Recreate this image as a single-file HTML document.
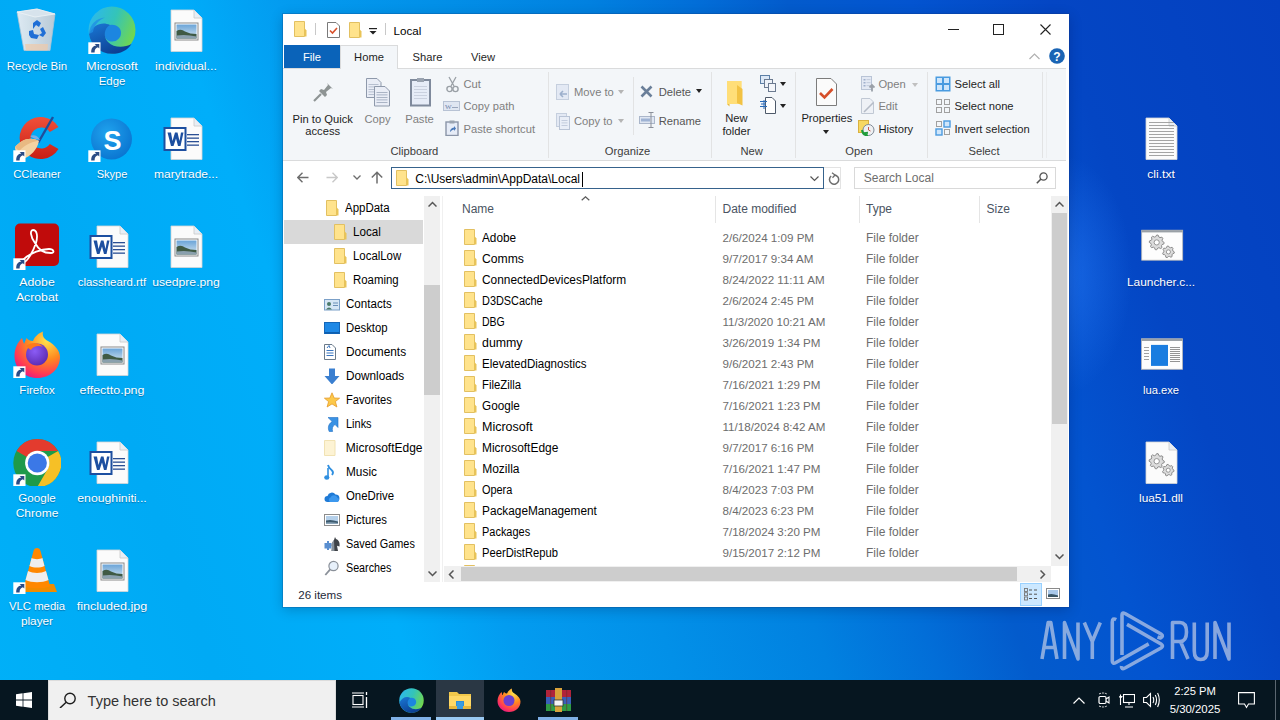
<!DOCTYPE html><html><head><meta charset="utf-8"><style>*{margin:0;padding:0;box-sizing:border-box}
html,body{width:1280px;height:720px;overflow:hidden}
body{position:relative;font-family:"Liberation Sans",sans-serif;font-size:12px;color:#000;background:#0890e6}
.a{position:absolute}
.t{position:absolute;white-space:nowrap;line-height:15px}
.lb{position:absolute;width:90px;text-align:center;color:#fff;font-size:11.8px;line-height:15px;text-shadow:0 1px 1px rgba(0,0,40,.35)}
#win{position:absolute;left:283px;top:14px;width:786px;height:593px;background:#fff;box-shadow:0 0 0 1px rgba(20,50,110,.22),0 3px 12px rgba(0,0,40,.22);overflow:hidden}
.r{position:absolute;white-space:nowrap;font-size:11.2px;line-height:13px;color:#1e1e1e}
.rd{color:#8a8a8a}
.c{text-align:center}
</style></head><body>
<div class="a" style="left:0;top:0;width:1280px;height:720px;background:radial-gradient(ellipse 70px 120px at 1062px 275px,rgba(45,130,255,0.5),rgba(45,130,255,0) 100%),linear-gradient(70deg,#00b0f8 0%,#00aaf5 15%,#00aefa 28%,#039cf0 35%,#0290e8 45%,#0181e0 55%,#026ed8 62%,#035bcc 68%,#0354d0 76%,#0446c4 85%,#0440c0 100%)"></div>
<svg class="a" style="left:13px;top:6px" width="48" height="48" viewBox="0 0 48 48"><defs><linearGradient id="i0rbg" x1="0" x2="1"><stop offset="0" stop-color="#e9eef3"/><stop offset="1" stop-color="#c3ccd6"/></linearGradient></defs><path d="M4 6 L24 3 L42 8 L37 44.5 L11 44.5 Z" fill="url(#i0rbg)" stroke="#b6c6d4" stroke-width="0.8" opacity="0.95"/><path d="M4 6 L24 3 L42 8 L22 11 Z" fill="#d7e3ec" stroke="#eef4f8" stroke-width="0.8"/><path d="M12 38 H35 L34.5 44.5 H12.8Z" fill="#f0c9a8" opacity="0.7"/><g fill="#1f6fd6"><path d="M20 17 L24 14 L28 17 L26 21 L23 19 L20 23Z"/><path d="M30 21 L33 27 L30 31 L26 29 L29 27 L27 23Z"/><path d="M16 25 L20 24 L21 28 L26 29 L24 33 L18 32 L16 29Z"/></g></svg><div class="lb" style="left:-8px;top:58.5px;transform:scaleX(0.967);">Recycle Bin</div>
<svg class="a" style="left:88px;top:6px" width="48" height="48" viewBox="0 0 48 48"><defs><linearGradient id="i1eg1" x1="0" y1="0.2" x2="1" y2="0.6"><stop offset="0" stop-color="#2db8ee"/><stop offset="0.5" stop-color="#34c4b8"/><stop offset="1" stop-color="#74d84a"/></linearGradient><linearGradient id="i1eg2" x1="0" y1="0" x2="0.6" y2="1"><stop offset="0" stop-color="#1a78d6"/><stop offset="1" stop-color="#0c3f92"/></linearGradient></defs><circle cx="24" cy="24" r="23.5" fill="url(#i1eg1)"/><path d="M19 20 C25 17 33 20 33 27 C33 33 27 37 21 35 C16 33 14 25 19 20Z" fill="#1c86e0"/><path d="M1 28 C5 19 14 15 22 19 C16 22 15 31 20 36 C26 42 36 42 43.5 38 C39.5 44.5 32.5 47.8 24 47.8 C12 47.8 2.5 39 1 28Z" fill="url(#i1eg2)"/><path d="M1 28 C1.5 18 9 12 17 11.5 C11 14 6 19 5 26Z" fill="#1f8fe4" opacity="0.8"/><g><rect x="0.3" y="36.3" width="12.2" height="12" fill="#fff"/><path d="M3.2 46.5 C3.2 42 5 40 8.3 39.6 L6.6 37.9 H11.3 V42.6 L9.9 41.2 C7.6 41.8 6.6 43.5 6.6 46.5 Z" fill="#2b4c86"/></g></svg><div class="lb" style="left:67px;top:58.5px;transform:scaleX(1.081);">Microsoft</div><div class="lb" style="left:67px;top:73.5px;transform:scaleX(0.965);">Edge</div>
<svg class="a" style="left:162px;top:6px" width="48" height="48" viewBox="0 0 48 48"><path d="M9 4 H32 L40 12 V45.5 H9 Z" fill="#fbfbfb" stroke="#d6d6d6" stroke-width="0.8"/><path d="M32 4 V12 H40" fill="#e8eef5" stroke="#c9c9c9" stroke-width="0.8"/><rect x="13" y="17" width="23" height="17" fill="#fff" stroke="#8a8a8a" stroke-width="1"/><defs><linearGradient id="i2sky" x1="0" y1="0" x2="0" y2="1"><stop offset="0" stop-color="#6aa4d8"/><stop offset="1" stop-color="#d6e6f0"/></linearGradient></defs><rect x="14.5" y="18.5" width="20" height="14" fill="url(#i2sky)"/><path d="M14.5 25 Q19 22.5 23 25.5 Q28 28 34.5 28 V32.5 H14.5Z" fill="#3f5a44"/><path d="M14.5 29.5 Q24 28 34.5 30.5 V32.5 H14.5Z" fill="#8aa0ae"/></svg><div class="lb" style="left:141px;top:58.5px;transform:scaleX(1.047);">individual...</div>
<svg class="a" style="left:13px;top:114px" width="48" height="48" viewBox="0 0 48 48"><defs><linearGradient id="i3cc" x1="0" y1="0" x2="0" y2="1"><stop offset="0" stop-color="#f0503a"/><stop offset="1" stop-color="#c81e14"/></linearGradient></defs><path d="M45.5 13 A21 21 0 1 0 45.5 35 L36.8 30 A10.5 10.5 0 1 1 36.8 18 Z" fill="url(#i3cc)"/><path d="M40 3 L25 29" stroke="#1f4e9c" stroke-width="2.4"/><path d="M2 33 C8 26 17 22 26 27 C24 36 18 42 10 45 C5 42 2 38 2 33Z" fill="#f3d2a2"/><path d="M2 33 C8 26 17 22 26 27 C22 27 14 29 6 37Z" fill="#e8b982"/><path d="M17 22 C21 20 25 22 27 26 C23 25 19 24 17 22Z" fill="#79aee6"/><g><rect x="0.3" y="36.3" width="12.2" height="12" fill="#fff"/><path d="M3.2 46.5 C3.2 42 5 40 8.3 39.6 L6.6 37.9 H11.3 V42.6 L9.9 41.2 C7.6 41.8 6.6 43.5 6.6 46.5 Z" fill="#2b4c86"/></g></svg><div class="lb" style="left:-8px;top:166.5px;transform:scaleX(0.955);">CCleaner</div>
<svg class="a" style="left:88px;top:114px" width="48" height="48" viewBox="0 0 48 48"><defs><radialGradient id="i4sk" cx="0.4" cy="0.35" r="0.7"><stop offset="0" stop-color="#1fa3ee"/><stop offset="1" stop-color="#0a74d0"/></radialGradient></defs><circle cx="23.5" cy="25" r="20.5" fill="url(#i4sk)"/><text x="24.5" y="36" text-anchor="middle" font-family="Liberation Sans" font-weight="bold" font-size="27" fill="#fff">S</text><g><rect x="0.3" y="36.3" width="12.2" height="12" fill="#fff"/><path d="M3.2 46.5 C3.2 42 5 40 8.3 39.6 L6.6 37.9 H11.3 V42.6 L9.9 41.2 C7.6 41.8 6.6 43.5 6.6 46.5 Z" fill="#2b4c86"/></g></svg><div class="lb" style="left:67px;top:166.5px;transform:scaleX(0.935);">Skype</div>
<svg class="a" style="left:162px;top:114px" width="48" height="48" viewBox="0 0 48 48"><path d="M9 4 H32 L40 12 V45.5 H9 Z" fill="#fbfbfb" stroke="#d6d6d6" stroke-width="0.8"/><path d="M32 4 V12 H40" fill="#e8eef5" stroke="#c9c9c9" stroke-width="0.8"/><rect x="25" y="20" width="12" height="1.3" fill="#2b4f94"/><rect x="25" y="23.5" width="12" height="1.3" fill="#2b4f94"/><rect x="25" y="27" width="12" height="1.3" fill="#2b4f94"/><rect x="25" y="30.5" width="12" height="1.3" fill="#2b4f94"/><rect x="2.5" y="14" width="21" height="22" fill="#fff" stroke="#1d4fa0" stroke-width="2"/><path d="M5.5 18.5 H9 L10.5 27 L13 18.5 H15.5 L17.5 27 L19 18.5 H21.5 L18.5 32 H16 L14 24.5 L11.5 32 H9Z" fill="#1d4fa0"/></svg><div class="lb" style="left:141px;top:166.5px;transform:scaleX(1.016);">marytrade...</div>
<svg class="a" style="left:13px;top:222px" width="48" height="48" viewBox="0 0 48 48"><rect x="2" y="1.6" width="44" height="42.4" rx="5" fill="#c00b0b"/><path d="M20 8 C17 8 17 14 22 21 C26 28 30 31 38 31 C42 31 41 27 36 27 C28 27 18 31 12 36 C9 38 9 40 11 40 C14 40 20 30 23 21 C25 14 24 8 20 8Z" fill="none" stroke="#fff" stroke-width="1.8"/><g><rect x="0.3" y="36.3" width="12.2" height="12" fill="#fff"/><path d="M3.2 46.5 C3.2 42 5 40 8.3 39.6 L6.6 37.9 H11.3 V42.6 L9.9 41.2 C7.6 41.8 6.6 43.5 6.6 46.5 Z" fill="#2b4c86"/></g></svg><div class="lb" style="left:-8px;top:274.5px;transform:scaleX(1.039);">Adobe</div><div class="lb" style="left:-8px;top:289.5px;transform:scaleX(1.038);">Acrobat</div>
<svg class="a" style="left:88px;top:222px" width="48" height="48" viewBox="0 0 48 48"><path d="M9 4 H32 L40 12 V45.5 H9 Z" fill="#fbfbfb" stroke="#d6d6d6" stroke-width="0.8"/><path d="M32 4 V12 H40" fill="#e8eef5" stroke="#c9c9c9" stroke-width="0.8"/><rect x="25" y="20" width="12" height="1.3" fill="#2b4f94"/><rect x="25" y="23.5" width="12" height="1.3" fill="#2b4f94"/><rect x="25" y="27" width="12" height="1.3" fill="#2b4f94"/><rect x="25" y="30.5" width="12" height="1.3" fill="#2b4f94"/><rect x="2.5" y="14" width="21" height="22" fill="#fff" stroke="#1d4fa0" stroke-width="2"/><path d="M5.5 18.5 H9 L10.5 27 L13 18.5 H15.5 L17.5 27 L19 18.5 H21.5 L18.5 32 H16 L14 24.5 L11.5 32 H9Z" fill="#1d4fa0"/></svg><div class="lb" style="left:67px;top:274.5px;transform:scaleX(0.966);">classheard.rtf</div>
<svg class="a" style="left:162px;top:222px" width="48" height="48" viewBox="0 0 48 48"><path d="M9 4 H32 L40 12 V45.5 H9 Z" fill="#fbfbfb" stroke="#d6d6d6" stroke-width="0.8"/><path d="M32 4 V12 H40" fill="#e8eef5" stroke="#c9c9c9" stroke-width="0.8"/><rect x="13" y="17" width="23" height="17" fill="#fff" stroke="#8a8a8a" stroke-width="1"/><defs><linearGradient id="i8sky" x1="0" y1="0" x2="0" y2="1"><stop offset="0" stop-color="#6aa4d8"/><stop offset="1" stop-color="#d6e6f0"/></linearGradient></defs><rect x="14.5" y="18.5" width="20" height="14" fill="url(#i8sky)"/><path d="M14.5 25 Q19 22.5 23 25.5 Q28 28 34.5 28 V32.5 H14.5Z" fill="#3f5a44"/><path d="M14.5 29.5 Q24 28 34.5 30.5 V32.5 H14.5Z" fill="#8aa0ae"/></svg><div class="lb" style="left:141px;top:274.5px;transform:scaleX(1.030);">usedpre.png</div>
<svg class="a" style="left:13px;top:330px" width="48" height="48" viewBox="0 0 48 48"><defs><radialGradient id="i9ff" cx="0.7" cy="0.2" r="0.9"><stop offset="0" stop-color="#ffe14d"/><stop offset="0.45" stop-color="#ff8a1f"/><stop offset="0.8" stop-color="#ff3a55"/><stop offset="1" stop-color="#e31587"/></radialGradient><radialGradient id="i9ffp" cx="0.4" cy="0.35" r="0.7"><stop offset="0" stop-color="#8b5cf6"/><stop offset="1" stop-color="#5b2ab0"/></radialGradient></defs><path d="M24.5 48 C11 48 1.5 38 1.5 26 C1.5 18 5 12 9 8 L11 14 L13.5 8 C15 10 17 11 20 11 C22 6 26 3 30 1.5 C29 6 31 9 35 11 C42 15 47 21 47 27 C47 39 37 48 24.5 48Z" fill="url(#i9ff)"/><circle cx="24" cy="24.5" r="11" fill="url(#i9ffp)"/><path d="M13 16 C18 12 26 12 30 17 C26 15 20 16 18 20 C15 18 14 17 13 16Z" fill="#ff7a1a"/><g><rect x="0.3" y="36.3" width="12.2" height="12" fill="#fff"/><path d="M3.2 46.5 C3.2 42 5 40 8.3 39.6 L6.6 37.9 H11.3 V42.6 L9.9 41.2 C7.6 41.8 6.6 43.5 6.6 46.5 Z" fill="#2b4c86"/></g></svg><div class="lb" style="left:-8px;top:382.5px;transform:scaleX(0.980);">Firefox</div>
<svg class="a" style="left:88px;top:330px" width="48" height="48" viewBox="0 0 48 48"><path d="M9 4 H32 L40 12 V45.5 H9 Z" fill="#fbfbfb" stroke="#d6d6d6" stroke-width="0.8"/><path d="M32 4 V12 H40" fill="#e8eef5" stroke="#c9c9c9" stroke-width="0.8"/><rect x="13" y="17" width="23" height="17" fill="#fff" stroke="#8a8a8a" stroke-width="1"/><defs><linearGradient id="i10sky" x1="0" y1="0" x2="0" y2="1"><stop offset="0" stop-color="#6aa4d8"/><stop offset="1" stop-color="#d6e6f0"/></linearGradient></defs><rect x="14.5" y="18.5" width="20" height="14" fill="url(#i10sky)"/><path d="M14.5 25 Q19 22.5 23 25.5 Q28 28 34.5 28 V32.5 H14.5Z" fill="#3f5a44"/><path d="M14.5 29.5 Q24 28 34.5 30.5 V32.5 H14.5Z" fill="#8aa0ae"/></svg><div class="lb" style="left:67px;top:382.5px;transform:scaleX(1.055);">effectto.png</div>
<svg class="a" style="left:13px;top:438px" width="48" height="48" viewBox="0 0 48 48"><circle cx="24.3" cy="25" r="24" fill="#1e9a4a"/><path d="M24.3 1 A24 24 0 0 1 45 13 L24.3 13 A12 12 0 0 0 13.9 19 L3.6 13 A24 24 0 0 1 24.3 1Z" fill="#e33b2e"/><path d="M45.1 13 A24 24 0 0 1 24.3 49 L34.7 31 A12 12 0 0 0 34.7 19 Z" fill="#f6c026"/><circle cx="24.3" cy="25" r="12.2" fill="#fff"/><circle cx="24.3" cy="25" r="9.6" fill="#3b78e7"/><g><rect x="0.3" y="36.3" width="12.2" height="12" fill="#fff"/><path d="M3.2 46.5 C3.2 42 5 40 8.3 39.6 L6.6 37.9 H11.3 V42.6 L9.9 41.2 C7.6 41.8 6.6 43.5 6.6 46.5 Z" fill="#2b4c86"/></g></svg><div class="lb" style="left:-8px;top:490.5px;transform:scaleX(0.981);">Google</div><div class="lb" style="left:-8px;top:505.5px;transform:scaleX(1.015);">Chrome</div>
<svg class="a" style="left:88px;top:438px" width="48" height="48" viewBox="0 0 48 48"><path d="M9 4 H32 L40 12 V45.5 H9 Z" fill="#fbfbfb" stroke="#d6d6d6" stroke-width="0.8"/><path d="M32 4 V12 H40" fill="#e8eef5" stroke="#c9c9c9" stroke-width="0.8"/><rect x="25" y="20" width="12" height="1.3" fill="#2b4f94"/><rect x="25" y="23.5" width="12" height="1.3" fill="#2b4f94"/><rect x="25" y="27" width="12" height="1.3" fill="#2b4f94"/><rect x="25" y="30.5" width="12" height="1.3" fill="#2b4f94"/><rect x="2.5" y="14" width="21" height="22" fill="#fff" stroke="#1d4fa0" stroke-width="2"/><path d="M5.5 18.5 H9 L10.5 27 L13 18.5 H15.5 L17.5 27 L19 18.5 H21.5 L18.5 32 H16 L14 24.5 L11.5 32 H9Z" fill="#1d4fa0"/></svg><div class="lb" style="left:67px;top:490.5px;transform:scaleX(1.039);">enoughiniti...</div>
<svg class="a" style="left:13px;top:546px" width="48" height="48" viewBox="0 0 48 48"><path d="M7 38 L41 38 L44 46 L4 46Z" fill="#f08c00"/><path d="M24 2 C22 2 21 3 20.5 5 L11 40 C14 43 34 43 37 40 L27.5 5 C27 3 26 2 24 2Z" fill="#ff8800"/><path d="M18.6 12 C21 13.5 27 13.5 29.4 12 L31.5 20 C27 22 21 22 16.5 20Z" fill="#eeeeee"/><path d="M15 25 C20 27.5 28 27.5 33 25 L35.5 34 C29 37 19 37 12.5 34Z" fill="#eeeeee"/><g><rect x="0.3" y="36.3" width="12.2" height="12" fill="#fff"/><path d="M3.2 46.5 C3.2 42 5 40 8.3 39.6 L6.6 37.9 H11.3 V42.6 L9.9 41.2 C7.6 41.8 6.6 43.5 6.6 46.5 Z" fill="#2b4c86"/></g></svg><div class="lb" style="left:-8px;top:598.5px;transform:scaleX(0.962);">VLC media</div><div class="lb" style="left:-8px;top:613.5px;">player</div>
<svg class="a" style="left:88px;top:546px" width="48" height="48" viewBox="0 0 48 48"><path d="M9 4 H32 L40 12 V45.5 H9 Z" fill="#fbfbfb" stroke="#d6d6d6" stroke-width="0.8"/><path d="M32 4 V12 H40" fill="#e8eef5" stroke="#c9c9c9" stroke-width="0.8"/><rect x="13" y="17" width="23" height="17" fill="#fff" stroke="#8a8a8a" stroke-width="1"/><defs><linearGradient id="i14sky" x1="0" y1="0" x2="0" y2="1"><stop offset="0" stop-color="#6aa4d8"/><stop offset="1" stop-color="#d6e6f0"/></linearGradient></defs><rect x="14.5" y="18.5" width="20" height="14" fill="url(#i14sky)"/><path d="M14.5 25 Q19 22.5 23 25.5 Q28 28 34.5 28 V32.5 H14.5Z" fill="#3f5a44"/><path d="M14.5 29.5 Q24 28 34.5 30.5 V32.5 H14.5Z" fill="#8aa0ae"/></svg><div class="lb" style="left:67px;top:598.5px;transform:scaleX(1.065);">fincluded.jpg</div>
<svg class="a" style="left:1137px;top:114px" width="48" height="48" viewBox="0 0 48 48"><path d="M9 4 H32 L40 12 V45.5 H9 Z" fill="#fbfbfb" stroke="#d6d6d6" stroke-width="0.8"/><path d="M32 4 V12 H40" fill="#e8eef5" stroke="#c9c9c9" stroke-width="0.8"/><rect x="12" y="8" width="25" height="0.9" fill="#9a9a9a"/><rect x="12" y="11" width="25" height="0.9" fill="#9a9a9a"/><rect x="12" y="14" width="25" height="0.9" fill="#9a9a9a"/><rect x="12" y="17" width="25" height="0.9" fill="#9a9a9a"/><rect x="12" y="20" width="25" height="0.9" fill="#9a9a9a"/><rect x="12" y="23" width="25" height="0.9" fill="#9a9a9a"/><rect x="12" y="26" width="25" height="0.9" fill="#9a9a9a"/><rect x="12" y="29" width="25" height="0.9" fill="#9a9a9a"/><rect x="12" y="32" width="25" height="0.9" fill="#9a9a9a"/><rect x="12" y="35" width="25" height="0.9" fill="#9a9a9a"/><rect x="12" y="38" width="25" height="0.9" fill="#9a9a9a"/><rect x="12" y="41" width="25" height="0.9" fill="#9a9a9a"/></svg><div class="lb" style="left:1116px;top:166.5px;transform:scaleX(1.030);">cli.txt</div>
<svg class="a" style="left:1137px;top:222px" width="48" height="48" viewBox="0 0 48 48"><rect x="4.7" y="8.2" width="41" height="30" fill="#fdfdfd" stroke="#b8b8b8" stroke-width="0.8"/><rect x="4.7" y="8.2" width="41" height="2.2" fill="#9aa0a6"/><polygon points="27.10,20.40 26.96,21.84 25.03,22.61 24.50,23.61 24.93,25.63 23.81,26.55 21.91,25.73 20.83,26.06 19.70,27.80 18.26,27.66 17.49,25.73 16.49,25.20 14.47,25.63 13.55,24.51 14.37,22.61 14.04,21.53 12.30,20.40 12.44,18.96 14.37,18.19 14.90,17.19 14.47,15.17 15.59,14.25 17.49,15.07 18.57,14.74 19.70,13.00 21.14,13.14 21.91,15.07 22.91,15.60 24.93,15.17 25.85,16.29 25.03,18.19 25.36,19.27" fill="#dcdcdc" stroke="#8c8c8c" stroke-width="1"/><circle cx="19.7" cy="20.4" r="2.59" fill="#fff" stroke="#8c8c8c" stroke-width="0.9"/><polygon points="37.30,29.90 37.15,31.21 35.55,31.90 35.00,32.77 35.08,34.51 33.96,35.22 32.42,34.39 31.40,34.50 30.09,35.65 28.84,35.22 28.53,33.50 27.80,32.77 26.08,32.46 25.65,31.21 26.80,29.90 26.91,28.88 26.08,27.34 26.79,26.22 28.53,26.30 29.40,25.75 30.09,24.15 31.40,24.00 32.42,25.41 33.40,25.75 35.08,25.29 36.01,26.22 35.55,27.90 35.89,28.88" fill="#dcdcdc" stroke="#8c8c8c" stroke-width="1"/><circle cx="31.4" cy="29.9" r="2.06" fill="#fff" stroke="#8c8c8c" stroke-width="0.9"/></svg><div class="lb" style="left:1116px;top:274.5px;transform:scaleX(1.009);">Launcher.c...</div>
<svg class="a" style="left:1137px;top:330px" width="48" height="48" viewBox="0 0 48 48"><rect x="4.5" y="8.8" width="41" height="30.5" fill="#fdfdfd" stroke="#b8b8b8" stroke-width="0.8"/><rect x="4.5" y="8.8" width="41" height="2.2" fill="#9aa0a6"/><rect x="14" y="14.9" width="17" height="21" fill="#1a7de0"/><rect x="7" y="17" width="5" height="0.8" fill="#8a8a8a"/><rect x="7" y="20" width="5" height="0.8" fill="#8a8a8a"/><rect x="7" y="23" width="5" height="0.8" fill="#8a8a8a"/><rect x="7" y="26" width="5" height="0.8" fill="#8a8a8a"/><rect x="7" y="29" width="5" height="0.8" fill="#8a8a8a"/><rect x="33" y="17" width="10" height="0.8" fill="#7a7a7a"/><rect x="33" y="19" width="10" height="0.8" fill="#7a7a7a"/><rect x="33" y="21" width="10" height="0.8" fill="#7a7a7a"/><rect x="33" y="23" width="10" height="0.8" fill="#7a7a7a"/><rect x="33" y="25" width="10" height="0.8" fill="#7a7a7a"/><rect x="33" y="27" width="10" height="0.8" fill="#7a7a7a"/><rect x="33" y="29" width="10" height="0.8" fill="#7a7a7a"/><rect x="33" y="31" width="10" height="0.8" fill="#7a7a7a"/></svg><div class="lb" style="left:1116px;top:382.5px;transform:scaleX(0.946);">lua.exe</div>
<svg class="a" style="left:1137px;top:438px" width="48" height="48" viewBox="0 0 48 48"><path d="M9 4 H32 L40 12 V45.5 H9 Z" fill="#fbfbfb" stroke="#d6d6d6" stroke-width="0.8"/><path d="M32 4 V12 H40" fill="#e8eef5" stroke="#c9c9c9" stroke-width="0.8"/><polygon points="27.30,23.20 27.15,24.68 25.18,25.47 24.63,26.49 25.07,28.57 23.92,29.52 21.97,28.68 20.86,29.01 19.70,30.80 18.22,30.65 17.43,28.68 16.41,28.13 14.33,28.57 13.38,27.42 14.22,25.47 13.89,24.36 12.10,23.20 12.25,21.72 14.22,20.93 14.77,19.91 14.33,17.83 15.48,16.88 17.43,17.72 18.54,17.39 19.70,15.60 21.18,15.75 21.97,17.72 22.99,18.27 25.07,17.83 26.02,18.98 25.18,20.93 25.51,22.04" fill="#dcdcdc" stroke="#8c8c8c" stroke-width="1"/><circle cx="19.7" cy="23.2" r="2.66" fill="#fff" stroke="#8c8c8c" stroke-width="0.9"/><polygon points="37.00,32.20 36.85,33.49 35.28,34.16 34.74,35.02 34.82,36.73 33.72,37.43 32.21,36.61 31.20,36.72 29.91,37.85 28.68,37.43 28.38,35.74 27.66,35.02 25.97,34.72 25.55,33.49 26.68,32.20 26.79,31.19 25.97,29.68 26.67,28.58 28.38,28.66 29.24,28.12 29.91,26.55 31.20,26.40 32.21,27.79 33.16,28.12 34.82,27.67 35.73,28.58 35.28,30.24 35.61,31.19" fill="#dcdcdc" stroke="#8c8c8c" stroke-width="1"/><circle cx="31.2" cy="32.2" r="2.03" fill="#fff" stroke="#8c8c8c" stroke-width="0.9"/></svg><div class="lb" style="left:1116px;top:490.5px;">lua51.dll</div>
<svg class="a" style="left:1030px;top:605px" width="210" height="70" viewBox="0 0 210 70"><g fill="none" stroke="rgba(205,212,232,0.66)" stroke-width="3.6" stroke-linejoin="round" stroke-linecap="butt"><path d="M12 54 L18.2 17.5 H20.8 L27 54 M14 42.5 H25"/><path d="M34.5 54 V17.5 L48 54 V17.5"/><path d="M54.3 17.5 L62.3 36.5 L70.3 17.5 M62.3 36 V54"/><path d="M86.2 14.6 Q82.3 12.5 82.3 17 V56 Q82.3 59.5 86 57.5 L118.7 38.9"/><path d="M92 50 V10 Q92 7 95 8.5 L131 29 Q134 31 130.5 33 L127.5 32"/><path d="M97 19.4 L131 39 Q134 41 131 43 L95 63 Q91 65 91.5 61"/><path d="M142.5 54 V17.5 H150 Q156.5 17.5 156.5 27 Q156.5 36.5 150 36.5 H142.5 M150.5 36.5 L158 54"/><path d="M164.3 17.5 V46 Q164.3 54.5 170.7 54.5 Q177.2 54.5 177.2 46 V17.5"/><path d="M185 54 V17.5 L199 54 V17.5"/></g></svg>
<div id="win">
<svg class="a" style="left:11px;top:7px" width="13" height="16" viewBox="0 0 13 16"><path d="M0.5 0.5 H10.5 V15.5 H0.5Z" fill="#ffe38c" stroke="#e2c061" stroke-width="1"/><path d="M10.5 7 L12.5 9.5 V15.5 H10.5Z" fill="#e9c457"/></svg>
<div class="a" style="left:32px;top:9px;width:1px;height:12px;background:#c8c8c8;"></div>
<svg class="a" style="left:44px;top:8px" width="13" height="16" viewBox="0 0 13 16"><path d="M0.5 0.5 H9 L12.5 4 V15.5 H0.5Z" fill="#fff" stroke="#7a7a7a" stroke-width="1"/><path d="M3 8.5 L5.5 11 L10 6" fill="none" stroke="#d9502a" stroke-width="1.6"/></svg>
<svg class="a" style="left:66px;top:8px" width="13" height="16" viewBox="0 0 13 16"><path d="M0.5 0.5 H10.5 V15.5 H0.5Z" fill="#ffe38c" stroke="#e2c061" stroke-width="1"/><path d="M10.5 7 L12.5 9.5 V15.5 H10.5Z" fill="#e9c457"/></svg>
<svg class="a" style="left:86px;top:14px" width="8" height="7" viewBox="0 0 8 7"><rect x="0" y="0" width="8" height="1.2" fill="#222"/><path d="M0.5 3 H7.5 L4 6.5Z" fill="#222"/></svg>
<div class="a" style="left:102px;top:9px;width:1px;height:12px;background:#c8c8c8;"></div>
<div class="r" style="top:10.08px;left:110.60px;color:#000;font-size:11.6px;">Local</div>
<div class="a" style="left:665px;top:15px;width:11px;height:1px;background:#222;"></div>
<div class="a" style="left:710px;top:10px;width:11px;height:11px;background:transparent;border:1px solid #222"></div>
<svg class="a" style="left:757px;top:10px" width="11" height="11" viewBox="0 0 11 11"><path d="M0.5 0.5 L10.5 10.5 M10.5 0.5 L0.5 10.5" stroke="#222" stroke-width="1.1"/></svg>
<svg class="a" style="left:746px;top:39px" width="11" height="7" viewBox="0 0 11 7"><path d="M0.5 6 L5.5 1 L10.5 6" fill="none" stroke="#b0b0b0" stroke-width="1.2"/></svg>
<svg class="a" style="left:766px;top:34px" width="16" height="16" viewBox="0 0 16 16"><circle cx="8" cy="8" r="7.8" fill="#1a64b4"/><text x="8" y="12.6" text-anchor="middle" font-family="Liberation Sans" font-weight="bold" font-size="12" fill="#fff">?</text></svg>
<div class="a" style="left:1px;top:31px;width:56px;height:23px;background:#0a63b9;"></div>
<div class="r" style="top:37.22px;left:4.00px;width:50px;text-align:center;color:#fff;">File</div>
<div class="a" style="left:57px;top:31px;width:58px;height:24px;background:#f3f6f9;border:1px solid #dadbdc;border-bottom:none;z-index:2"></div>
<div style="position:relative;z-index:3"><div class="r" style="top:37.22px;left:58.00px;width:56px;text-align:center;color:#1e1e1e;">Home</div></div>
<div class="r" style="top:37.22px;left:116.50px;width:56px;text-align:center;color:#1e1e1e;">Share</div>
<div class="r" style="top:37.22px;left:172.00px;width:56px;text-align:center;color:#1e1e1e;">View</div>
<div class="a" style="left:0px;top:54px;width:783px;height:93px;background:#f3f6f9;border-top:1px solid #dadbdc;border-bottom:1px solid #dadbdc"></div>
<div class="a" style="left:265px;top:58px;width:1px;height:86px;background:#e2e3e4;"></div>
<div class="a" style="left:428px;top:58px;width:1px;height:86px;background:#e2e3e4;"></div>
<div class="a" style="left:512px;top:58px;width:1px;height:86px;background:#e2e3e4;"></div>
<div class="a" style="left:644px;top:58px;width:1px;height:86px;background:#e2e3e4;"></div>
<div class="a" style="left:759px;top:58px;width:1px;height:86px;background:#e2e3e4;"></div>
<div class="a" style="left:763px;top:58px;width:1px;height:86px;background:#ebedef;"></div>
<div class="a" style="left:350px;top:63px;width:1px;height:58px;background:#e2e3e4;"></div>
<svg class="a" style="left:30px;top:68px" width="21" height="20" viewBox="0 0 21 20"><path d="M1 19 L8 12" stroke="#8e9494" stroke-width="2.2"/><path d="M6 9 L12 15 L14 13 L13 10 L18 6 L20 7 L14 1 L15 3 L11 8 L8 7Z" fill="#8e9494"/></svg>
<div class="r" style="top:98.52px;left:-0.30px;width:80px;text-align:center;color:#1e1e1e;">Pin to Quick</div>
<div class="r" style="top:111.42px;left:-0.30px;width:80px;text-align:center;color:#1e1e1e;">access</div>
<svg class="a" style="left:83px;top:64px" width="25" height="29" viewBox="0 0 25 29"><path d="M0.5 0.5 H11 L15 4.5 V19.5 H0.5Z" fill="#e9edf6" stroke="#8e99ab"/><rect x="2.5" y="6" width="10" height="0.8" fill="#a9b3c6"/><rect x="2.5" y="8.5" width="10" height="0.8" fill="#a9b3c6"/><rect x="2.5" y="11" width="10" height="0.8" fill="#a9b3c6"/><rect x="2.5" y="13.5" width="10" height="0.8" fill="#a9b3c6"/><rect x="2.5" y="16" width="10" height="0.8" fill="#a9b3c6"/><path d="M8.5 8.5 H19 L23.5 13 V28 H8.5Z" fill="#e9edf6" stroke="#8e99ab"/><rect x="10.5" y="14" width="11" height="0.8" fill="#9aa5ba"/><rect x="10.5" y="16.5" width="11" height="0.8" fill="#9aa5ba"/><rect x="10.5" y="19" width="11" height="0.8" fill="#9aa5ba"/><rect x="10.5" y="21.5" width="11" height="0.8" fill="#9aa5ba"/><rect x="10.5" y="24" width="11" height="0.8" fill="#9aa5ba"/></svg>
<div class="r" style="top:98.52px;left:74.50px;width:40px;text-align:center;color:#7f7f7f;">Copy</div>
<svg class="a" style="left:127px;top:63px" width="21" height="30" viewBox="0 0 21 30"><rect x="1" y="3" width="19" height="25.5" fill="#e6ecf7" stroke="#7f8a9c" stroke-width="2"/><rect x="7" y="1" width="7" height="4" fill="#9aa3b0"/><rect x="4" y="9" width="13" height="0.8" fill="#c3cbd9"/><rect x="4" y="12" width="13" height="0.8" fill="#c3cbd9"/><rect x="4" y="15" width="13" height="0.8" fill="#c3cbd9"/><rect x="4" y="18" width="13" height="0.8" fill="#c3cbd9"/><rect x="4" y="21" width="13" height="0.8" fill="#c3cbd9"/></svg>
<div class="r" style="top:98.52px;left:116.50px;width:40px;text-align:center;color:#7f7f7f;">Paste</div>
<svg class="a" style="left:163px;top:62px" width="13" height="17" viewBox="0 0 13 17"><path d="M3 1 L8 10 M10 1 L5 10" stroke="#9aa0a6" stroke-width="1.3"/><circle cx="3.5" cy="13" r="2.6" fill="none" stroke="#9aa0a6" stroke-width="1.4"/><circle cx="9.5" cy="13" r="2.6" fill="none" stroke="#9aa0a6" stroke-width="1.4"/></svg>
<div class="r" style="top:64.22px;left:180.50px;color:#7f7f7f;">Cut</div>
<svg class="a" style="left:160px;top:87px" width="17" height="10" viewBox="0 0 17 10"><rect x="0.5" y="0.5" width="16" height="9" fill="#dfe6f2" stroke="#b7c2d4"/><text x="2" y="7.5" font-family="Liberation Serif" font-size="7" fill="#6b7fa6">W</text><rect x="9" y="6" width="6" height="0.8" fill="#8896b0"/></svg>
<div class="r" style="top:86.42px;left:180.50px;color:#7f7f7f;">Copy path</div>
<svg class="a" style="left:162px;top:106px" width="14" height="16" viewBox="0 0 14 16"><rect x="1" y="2" width="12" height="13.5" fill="#e6ecf7" stroke="#8a95a8" stroke-width="1.4"/><rect x="4.5" y="0.5" width="5" height="3" fill="#9aa3b0"/><path d="M5 12 Q5 8 9 7.5 V6 L11 8.5 L9 11 V9.5 Q7 9.5 5 12Z" fill="#4a79b8"/></svg>
<div class="r" style="top:108.62px;left:180.50px;color:#7f7f7f;">Paste shortcut</div>
<div class="r" style="top:131.22px;left:91.40px;width:80px;text-align:center;color:#3c3c3c;">Clipboard</div>
<svg class="a" style="left:273px;top:70px" width="14" height="16" viewBox="0 0 14 16"><rect x="0.5" y="0.5" width="12" height="15" fill="#e3e9f4" stroke="#c5cfde"/><path d="M4 10 H11 M4 10 L7 7 M4 10 L7 13" stroke="#9db0cc" stroke-width="1.6" fill="none"/></svg>
<div class="r" style="top:71.62px;left:291.00px;color:#7f7f7f;">Move to</div>
<svg class="a" style="left:335px;top:76px" width="6" height="4" viewBox="0 0 6 4"><path d="M0 0 H6 L3.0 4Z" fill="#b5b5b5"/></svg>
<svg class="a" style="left:273px;top:99px" width="14" height="17" viewBox="0 0 14 17"><rect x="0.5" y="0.5" width="10" height="13" fill="#e3e9f4" stroke="#c5cfde"/><rect x="3.5" y="3.5" width="10" height="13" fill="#e9eef7" stroke="#b9c4d6"/><rect x="5.5" y="7" width="6" height="0.8" fill="#b9c4d6"/><rect x="5.5" y="9.5" width="6" height="0.8" fill="#b9c4d6"/><rect x="5.5" y="12" width="6" height="0.8" fill="#b9c4d6"/></svg>
<div class="r" style="top:100.62px;left:291.00px;color:#7f7f7f;">Copy to</div>
<svg class="a" style="left:335px;top:105px" width="6" height="4" viewBox="0 0 6 4"><path d="M0 0 H6 L3.0 4Z" fill="#b5b5b5"/></svg>
<svg class="a" style="left:357px;top:71px" width="13" height="13" viewBox="0 0 13 13"><path d="M1.5 1.5 L11.5 11.5 M11.5 1.5 L1.5 11.5" stroke="#6a7f99" stroke-width="2.6"/></svg>
<div class="r" style="top:71.87px;left:375.75px;color:#555;">Delete</div>
<svg class="a" style="left:413px;top:75px" width="6" height="4" viewBox="0 0 6 4"><path d="M0 0 H6 L3.0 4Z" fill="#222"/></svg>
<svg class="a" style="left:356px;top:98px" width="17" height="16" viewBox="0 0 17 16"><rect x="0.5" y="4.5" width="15" height="7" fill="#dfe6f2" stroke="#aab6ca"/><rect x="2" y="6.5" width="9" height="3" fill="#9fb3d4"/><path d="M12 0.5 V15.5 M9.5 0.5 H14.5 M9.5 15.5 H14.5" stroke="#8a8f99" stroke-width="1"/></svg>
<div class="r" style="top:101.02px;left:375.75px;color:#555;">Rename</div>
<div class="r" style="top:131.22px;left:304.50px;width:80px;text-align:center;color:#3c3c3c;">Organize</div>
<svg class="a" style="left:442px;top:66px" width="19" height="27" viewBox="0 0 19 27"><path d="M2 1 H16.5 V24 H2Z" fill="#ffd75e"/><path d="M2 1 H16.5 V24 H2Z" fill="#ffe38a" opacity="0.6"/><path d="M12 5 L17.5 9 V25.5 L12 23Z" fill="#f2c243"/><path d="M2 24 L4.5 26.5 V24Z" fill="#e8b93a"/></svg>
<div class="r" style="top:98.22px;left:428.40px;width:50px;text-align:center;color:#1e1e1e;">New</div>
<div class="r" style="top:110.62px;left:428.40px;width:50px;text-align:center;color:#1e1e1e;">folder</div>
<svg class="a" style="left:477px;top:61px" width="17" height="17" viewBox="0 0 17 17"><rect x="0.5" y="0.5" width="9" height="8" fill="#dce8f6" stroke="#5c7fa6"/><rect x="4.5" y="4.5" width="8" height="8" fill="#eef2f8" stroke="#6b7a90"/><rect x="8.5" y="8.5" width="7" height="8" fill="#f4f6fa" stroke="#6b7a90"/></svg>
<svg class="a" style="left:497px;top:68px" width="6" height="4" viewBox="0 0 6 4"><path d="M0 0 H6 L3.0 4Z" fill="#222"/></svg>
<svg class="a" style="left:477px;top:83px" width="17" height="17" viewBox="0 0 17 17"><path d="M5.5 0.5 H12 L15.5 4 V16.5 H5.5Z" fill="#fff" stroke="#4e5a6a"/><path d="M0 4.5 H7 M1 7 H6 M0 9.5 H7" stroke="#2a6bb8" stroke-width="1"/><path d="M4 3 V12" stroke="#2a6bb8"/></svg>
<svg class="a" style="left:497px;top:90px" width="6" height="4" viewBox="0 0 6 4"><path d="M0 0 H6 L3.0 4Z" fill="#222"/></svg>
<div class="r" style="top:131.22px;left:443.70px;width:50px;text-align:center;color:#3c3c3c;">New</div>
<svg class="a" style="left:533px;top:64px" width="21" height="28" viewBox="0 0 21 28"><path d="M0.5 0.5 H15 L20.5 6 V27.5 H0.5Z" fill="#fbfbfb" stroke="#7c7c7c"/><path d="M4 15 L8.5 19.5 L16.5 11" fill="none" stroke="#d64f2a" stroke-width="2.6"/></svg>
<div class="r" style="top:98.22px;left:508.90px;width:70px;text-align:center;color:#1e1e1e;">Properties</div>
<svg class="a" style="left:540px;top:116px" width="6" height="4" viewBox="0 0 6 4"><path d="M0 0 H6 L3.0 4Z" fill="#222"/></svg>
<svg class="a" style="left:578px;top:62px" width="14" height="16" viewBox="0 0 14 16"><rect x="0.5" y="0.5" width="10" height="13" fill="#e3e9f4" stroke="#b9c4d6"/><rect x="2.5" y="3" width="2" height="1.5" fill="#9fb0cc"/><rect x="5.5" y="3.3" width="4" height="0.8" fill="#b9c4d6"/><rect x="2.5" y="6" width="2" height="1.5" fill="#9fb0cc"/><rect x="5.5" y="6.3" width="4" height="0.8" fill="#b9c4d6"/><rect x="2.5" y="9" width="2" height="1.5" fill="#9fb0cc"/><rect x="5.5" y="9.3" width="4" height="0.8" fill="#b9c4d6"/><path d="M11 15.5 V9 M8.5 11.5 L11 9 L13.5 11.5" stroke="#9aa0a8" stroke-width="1.8" fill="none"/></svg>
<div class="r" style="top:63.82px;left:595.40px;color:#7f7f7f;">Open</div>
<svg class="a" style="left:629px;top:69px" width="6" height="4" viewBox="0 0 6 4"><path d="M0 0 H6 L3.0 4Z" fill="#c0c0c0"/></svg>
<svg class="a" style="left:578px;top:84px" width="14" height="16" viewBox="0 0 14 16"><path d="M0.5 0.5 H9 L12.5 4 V15.5 H0.5Z" fill="#eef1f6" stroke="#c0c8d4"/><path d="M3 14 L12.5 4.5" stroke="#b5bcc7" stroke-width="1.6"/></svg>
<div class="r" style="top:86.12px;left:595.40px;color:#7f7f7f;">Edit</div>
<svg class="a" style="left:575px;top:106px" width="17" height="16" viewBox="0 0 17 16"><rect x="0.5" y="0.5" width="10" height="12" fill="#f7d862" stroke="#d9b13f"/><circle cx="10.5" cy="10" r="5.5" fill="#eef0f2" stroke="#7f8a96"/><path d="M10.5 7 V10 L12.5 11" stroke="#c2433b" stroke-width="0.9" fill="none"/><path d="M4 10 A6.5 6.5 0 0 0 9 15.5 L7.5 13 L10 12.8" fill="none" stroke="#1f9c3a" stroke-width="2"/></svg>
<div class="r" style="top:108.52px;left:595.40px;color:#1e1e1e;">History</div>
<div class="r" style="top:131.22px;left:551.00px;width:50px;text-align:center;color:#3c3c3c;">Open</div>
<svg class="a" style="left:652px;top:62px" width="16" height="16" viewBox="0 0 16 16"><rect x="0.5" y="0.5" width="15" height="15" fill="#4a9be0"/><rect x="2" y="2" width="5" height="5" fill="#cfe6fb"/><rect x="9" y="2" width="5" height="5" fill="#cfe6fb"/><rect x="2" y="9" width="5" height="5" fill="#cfe6fb"/><rect x="9" y="9" width="5" height="5" fill="#cfe6fb"/></svg>
<div class="r" style="top:63.82px;left:671.50px;color:#1e1e1e;">Select all</div>
<svg class="a" style="left:652px;top:84px" width="16" height="16" viewBox="0 0 16 16"><g fill="none" stroke="#a0a0a0"><rect x="1.5" y="1.5" width="5" height="5"/><rect x="9.5" y="1.5" width="5" height="5"/><rect x="1.5" y="9.5" width="5" height="5"/><rect x="9.5" y="9.5" width="5" height="5"/></g></svg>
<div class="r" style="top:86.12px;left:671.50px;color:#1e1e1e;">Select none</div>
<svg class="a" style="left:652px;top:106px" width="16" height="16" viewBox="0 0 16 16"><g fill="#cfe6fb" stroke="#4a9be0" stroke-width="1.4"><rect x="9" y="1" width="6" height="6"/><rect x="1" y="9" width="6" height="6"/></g><g fill="none" stroke="#a0a0a0"><rect x="1.5" y="1.5" width="5" height="5"/><rect x="9.5" y="9.5" width="5" height="5"/></g></svg>
<div class="r" style="top:108.52px;left:671.50px;color:#1e1e1e;">Invert selection</div>
<div class="r" style="top:131.22px;left:671.00px;width:60px;text-align:center;color:#3c3c3c;">Select</div>
<svg class="a" style="left:14px;top:158px" width="12" height="11" viewBox="0 0 12 11"><path d="M0.8 5.5 H11.5 M5.5 0.8 L0.8 5.5 L5.5 10.2" fill="none" stroke="#6d6d6d" stroke-width="1.4"/></svg>
<svg class="a" style="left:43px;top:158px" width="12" height="11" viewBox="0 0 12 11"><path d="M11.2 5.5 H0.5 M6.5 0.8 L11.2 5.5 L6.5 10.2" fill="none" stroke="#c8c8c8" stroke-width="1.4"/></svg>
<svg class="a" style="left:70px;top:161px" width="8" height="5" viewBox="0 0 8 5"><path d="M0.5 0.5 L4 4 L7.5 0.5" fill="none" stroke="#6d6d6d" stroke-width="1.3"/></svg>
<svg class="a" style="left:88px;top:157px" width="12" height="13" viewBox="0 0 12 13"><path d="M6 12.5 V1.5 M0.8 6.5 L6 1.2 L11.2 6.5" fill="none" stroke="#6d6d6d" stroke-width="1.5"/></svg>
<div class="a" style="left:108px;top:153px;width:433px;height:22px;background:#fff;border:1px solid #36628c"></div>
<svg class="a" style="left:113px;top:156px" width="13" height="16" viewBox="0 0 13 16"><path d="M0.5 0.5 H10.5 V15.5 H0.5Z" fill="#ffe38c" stroke="#e2c061" stroke-width="1"/><path d="M10.5 7 L12.5 9.5 V15.5 H10.5Z" fill="#e9c457"/></svg>
<div class="t" style="top:158.14px;left:132.30px;line-height:15px;">C:\Users\admin\AppData\Local</div>
<div class="a" style="left:299px;top:158px;width:1px;height:15px;background:#000;"></div>
<svg class="a" style="left:527px;top:162px" width="9" height="6" viewBox="0 0 9 6"><path d="M0.5 0.5 L4.5 4.5 L8.5 0.5" fill="none" stroke="#555" stroke-width="1.2"/></svg>
<div class="a" style="left:541px;top:153px;width:17px;height:22px;background:#fff;border:1px solid #e3e3e3;border-left:none"></div>
<svg class="a" style="left:545px;top:158px" width="12" height="13" viewBox="0 0 12 13"><path d="M3.2 4 A4.6 4.6 0 1 0 6 3" fill="none" stroke="#6d6d6d" stroke-width="1.5"/><path d="M4 0.8 L7 3 L4.5 5.8" fill="none" stroke="#6d6d6d" stroke-width="1.3"/></svg>
<div class="a" style="left:571px;top:153px;width:202px;height:22px;background:#fff;border:1px solid #d9d9d9"></div>
<div class="t" style="top:157.24px;left:580.75px;color:#6d6d6d;line-height:15px;">Search Local</div>
<svg class="a" style="left:753px;top:158px" width="12" height="12" viewBox="0 0 12 12"><circle cx="7.5" cy="4.5" r="3.6" fill="none" stroke="#555" stroke-width="1.3"/><path d="M5 7 L0.8 11.2" stroke="#555" stroke-width="1.6"/></svg>
<svg class="a" style="left:43px;top:186px" width="13" height="16" viewBox="0 0 13 16"><path d="M0.5 0.5 H10.5 V15.5 H0.5Z" fill="#ffe38c" stroke="#e2c061" stroke-width="1"/><path d="M10.5 7 L12.5 9.5 V15.5 H10.5Z" fill="#e9c457"/></svg>
<div class="t" style="top:186.54px;left:62.20px;line-height:15px;transform:scaleX(0.957);transform-origin:0 0;">AppData</div>
<div class="a" style="left:1px;top:206px;width:139px;height:24px;background:#d9d9d9;"></div>
<svg class="a" style="left:51px;top:210px" width="13" height="16" viewBox="0 0 13 16"><path d="M0.5 0.5 H10.5 V15.5 H0.5Z" fill="#ffe38c" stroke="#e2c061" stroke-width="1"/><path d="M10.5 7 L12.5 9.5 V15.5 H10.5Z" fill="#e9c457"/></svg>
<div class="t" style="top:210.54px;left:70.40px;line-height:15px;transform:scaleX(0.971);transform-origin:0 0;">Local</div>
<svg class="a" style="left:51px;top:234px" width="13" height="16" viewBox="0 0 13 16"><path d="M0.5 0.5 H10.5 V15.5 H0.5Z" fill="#ffe38c" stroke="#e2c061" stroke-width="1"/><path d="M10.5 7 L12.5 9.5 V15.5 H10.5Z" fill="#e9c457"/></svg>
<div class="t" style="top:234.54px;left:70.40px;line-height:15px;transform:scaleX(0.950);transform-origin:0 0;">LocalLow</div>
<svg class="a" style="left:51px;top:258px" width="13" height="16" viewBox="0 0 13 16"><path d="M0.5 0.5 H10.5 V15.5 H0.5Z" fill="#ffe38c" stroke="#e2c061" stroke-width="1"/><path d="M10.5 7 L12.5 9.5 V15.5 H10.5Z" fill="#e9c457"/></svg>
<div class="t" style="top:258.54px;left:70.40px;line-height:15px;transform:scaleX(0.950);transform-origin:0 0;">Roaming</div>
<svg class="a" style="left:41px;top:285px" width="16" height="12" viewBox="0 0 16 12"><rect x="0.5" y="0.5" width="15" height="10.5" fill="#d6e6f5" stroke="#7ba0c8"/><circle cx="5" cy="5" r="2" fill="#4a7a6a"/><path d="M2 10.5 Q5 6.5 8 10.5Z" fill="#4a7a6a"/><rect x="9" y="3.5" width="5" height="1" fill="#6a8fb8"/><rect x="9" y="6" width="5" height="1" fill="#6a8fb8"/></svg>
<div class="t" style="top:282.54px;left:62.80px;line-height:15px;transform:scaleX(0.966);transform-origin:0 0;">Contacts</div>
<svg class="a" style="left:41px;top:308px" width="16" height="12" viewBox="0 0 16 12"><rect x="0.5" y="0.5" width="15" height="11" fill="#1e88e5" stroke="#1466b8"/><rect x="1" y="10" width="14" height="1.5" fill="#0d5fb0"/></svg>
<div class="t" style="top:306.54px;left:62.80px;line-height:15px;transform:scaleX(0.945);transform-origin:0 0;">Desktop</div>
<svg class="a" style="left:41px;top:330px" width="16" height="16" viewBox="0 0 16 16"><path d="M0.5 0.5 H8 L11.5 4 V15.5 H0.5Z" fill="#fff" stroke="#6a7a8a"/><rect x="2.5" y="6" width="7" height="1" fill="#3b76c0"/><rect x="2.5" y="8.5" width="7" height="1" fill="#3b76c0"/><rect x="2.5" y="11" width="7" height="1" fill="#3b76c0"/><path d="M3 4 L5 1.5 L6 4" stroke="#3b76c0" fill="none"/></svg>
<div class="t" style="top:330.54px;left:62.80px;line-height:15px;transform:scaleX(0.990);transform-origin:0 0;">Documents</div>
<svg class="a" style="left:41px;top:354px" width="16" height="16" viewBox="0 0 16 16"><path d="M5 0.5 H11 V8 H15.5 L8 16.5 L0.5 8 H5Z" fill="#3a7fd0"/></svg>
<div class="t" style="top:354.54px;left:62.80px;line-height:15px;transform:scaleX(0.980);transform-origin:0 0;">Downloads</div>
<svg class="a" style="left:41px;top:378px" width="16" height="16" viewBox="0 0 16 16"><path d="M8 0.8 L10.2 6 L15.6 6.2 L11.4 9.6 L12.9 15 L8 11.9 L3.1 15 L4.6 9.6 L0.4 6.2 L5.8 6Z" fill="#fcc94a" stroke="#e49b2c" stroke-width="0.8"/></svg>
<div class="t" style="top:378.54px;left:62.80px;line-height:15px;transform:scaleX(0.927);transform-origin:0 0;">Favorites</div>
<svg class="a" style="left:41px;top:402px" width="16" height="16" viewBox="0 0 16 16"><path d="M4 1.5 H14 V11.5 L11 8.5 C8.5 10 7.8 12.5 8.6 15.5 H5.2 C3.6 12 4.2 8 8.2 5.6 Z" fill="#3a92e4" stroke="#2170c4" stroke-width="0.6"/></svg>
<div class="t" style="top:402.54px;left:62.80px;line-height:15px;transform:scaleX(0.914);transform-origin:0 0;">Links</div>
<svg class="a" style="left:41px;top:426px" width="16" height="16" viewBox="0 0 16 16"><path d="M0.5 0.5 H11 V15.5 H0.5Z" fill="#fdf3d4" stroke="#f1e2b3"/></svg>
<div class="t" style="top:426.54px;left:62.80px;line-height:15px;">MicrosoftEdge</div>
<svg class="a" style="left:41px;top:450px" width="16" height="16" viewBox="0 0 16 16"><path d="M4 4 V13" stroke="#2f8fe0" stroke-width="1.6"/><ellipse cx="2.8" cy="13.5" rx="2.6" ry="2.2" fill="#2f8fe0"/><path d="M4 1 Q4.5 4 8 6.5 Q10 8.5 8 11" fill="none" stroke="#2f8fe0" stroke-width="1.8"/></svg>
<div class="t" style="top:450.54px;left:62.80px;line-height:15px;transform:scaleX(0.987);transform-origin:0 0;">Music</div>
<svg class="a" style="left:41px;top:476px" width="16" height="13" viewBox="0 0 16 13"><path d="M3.5 12 A3 3 0 0 1 3.5 6 A4.5 4.5 0 0 1 11.5 4.5 A3.8 3.8 0 0 1 12.5 12Z" fill="#1f7ad6"/><path d="M6 12 A2.5 2.5 0 0 1 6.5 7.5 A3.8 3.8 0 0 1 13.5 7.8 A2.2 2.2 0 0 1 13.5 12Z" fill="#3c98ee"/></svg>
<div class="t" style="top:474.54px;left:62.80px;line-height:15px;transform:scaleX(0.948);transform-origin:0 0;">OneDrive</div>
<svg class="a" style="left:41px;top:500px" width="16" height="12" viewBox="0 0 16 12"><rect x="0.5" y="0.5" width="15" height="11" fill="#fff" stroke="#8c8c8c"/><rect x="2" y="2" width="12" height="8" fill="#b5d0ea"/><path d="M2 6.5 Q7 5 14 7.5 V10 H2Z" fill="#3c5a6e"/><path d="M2 8.5 Q8 7.8 14 9 V10 H2Z" fill="#8aa4b8"/></svg>
<div class="t" style="top:498.54px;left:62.80px;line-height:15px;transform:scaleX(0.944);transform-origin:0 0;">Pictures</div>
<svg class="a" style="left:41px;top:522px" width="16" height="16" viewBox="0 0 16 16"><path d="M0.5 7 H3 V5 H5 V7 H7.5 V12.5 H5 V14 H3 V12.5 H0.5Z" fill="#5a8fd0"/><path d="M7.5 15 L8 11 C7 9 8 6 10 4 L11 1 L12 3 C15 4 16 7 15.5 10.5 L13 9.8 L14 15Z" fill="#3f4348"/><path d="M7.5 15 L8 11 C7 9 8 6 10 4 L10.5 15Z" fill="#9aa4ae" opacity="0.8"/></svg>
<div class="t" style="top:522.54px;left:62.80px;line-height:15px;transform:scaleX(0.905);transform-origin:0 0;">Saved Games</div>
<svg class="a" style="left:41px;top:546px" width="16" height="16" viewBox="0 0 16 16"><circle cx="9.5" cy="6" r="4.6" fill="#e8f1fb" stroke="#8a9099" stroke-width="1.2"/><path d="M6.2 9.3 L1.3 15" stroke="#8a9099" stroke-width="1.8"/></svg>
<div class="t" style="top:546.54px;left:62.80px;line-height:15px;transform:scaleX(0.894);transform-origin:0 0;">Searches</div>
<div class="a" style="left:141px;top:182px;width:16px;height:386px;background:#f0f0f0;"></div>
<div class="a" style="left:141px;top:271px;width:16px;height:110px;background:#cdcdcd;"></div>
<svg class="a" style="left:145px;top:187px" width="9" height="6" viewBox="0 0 9 6"><path d="M0.5 5.5 L4.5 1.5 L8.5 5.5" fill="none" stroke="#555" stroke-width="1.5"/></svg>
<svg class="a" style="left:145px;top:557px" width="9" height="6" viewBox="0 0 9 6"><path d="M0.5 0.5 L4.5 4.5 L8.5 0.5" fill="none" stroke="#555" stroke-width="1.5"/></svg>
<div class="a" style="left:159px;top:182px;width:1px;height:386px;background:#f0f0f0;"></div>
<div class="t" style="top:187.94px;left:179.00px;color:#4a5462;line-height:15px;">Name</div>
<div class="t" style="top:187.94px;left:439.50px;color:#4a5462;line-height:15px;">Date modified</div>
<div class="t" style="top:187.94px;left:583.00px;color:#4a5462;line-height:15px;">Type</div>
<div class="t" style="top:187.94px;left:703.60px;color:#4a5462;line-height:15px;">Size</div>
<div class="a" style="left:432px;top:182px;width:1px;height:27px;background:#e5e5e5;"></div>
<div class="a" style="left:576px;top:182px;width:1px;height:27px;background:#e5e5e5;"></div>
<div class="a" style="left:696px;top:182px;width:1px;height:27px;background:#e5e5e5;"></div>
<svg class="a" style="left:298px;top:182px" width="9" height="5" viewBox="0 0 9 5"><path d="M0.7 4.3 L4.5 0.8 L8.3 4.3" fill="none" stroke="#5a5a5a" stroke-width="1.2"/></svg>
<svg class="a" style="left:181px;top:215px" width="13" height="16" viewBox="0 0 13 16"><path d="M0.5 0.5 H10.5 V15.5 H0.5Z" fill="#ffe38c" stroke="#e2c061" stroke-width="1"/><path d="M10.5 7 L12.5 9.5 V15.5 H10.5Z" fill="#e9c457"/></svg>
<div class="t" style="top:216.94px;left:199.20px;line-height:15px;transform:scaleX(0.983);transform-origin:0 0;">Adobe</div>
<div class="t" style="top:216.28px;left:439.50px;color:#6d6d6d;font-size:11.6px;line-height:15px;">2/6/2024 1:09 PM</div>
<div class="t" style="top:216.94px;left:583.00px;color:#6d6d6d;line-height:15px;">File folder</div>
<svg class="a" style="left:181px;top:236px" width="13" height="16" viewBox="0 0 13 16"><path d="M0.5 0.5 H10.5 V15.5 H0.5Z" fill="#ffe38c" stroke="#e2c061" stroke-width="1"/><path d="M10.5 7 L12.5 9.5 V15.5 H10.5Z" fill="#e9c457"/></svg>
<div class="t" style="top:237.94px;left:199.20px;line-height:15px;transform:scaleX(1.015);transform-origin:0 0;">Comms</div>
<div class="t" style="top:237.28px;left:439.50px;color:#6d6d6d;font-size:11.6px;line-height:15px;">9/7/2017 9:34 AM</div>
<div class="t" style="top:237.94px;left:583.00px;color:#6d6d6d;line-height:15px;">File folder</div>
<svg class="a" style="left:181px;top:257px" width="13" height="16" viewBox="0 0 13 16"><path d="M0.5 0.5 H10.5 V15.5 H0.5Z" fill="#ffe38c" stroke="#e2c061" stroke-width="1"/><path d="M10.5 7 L12.5 9.5 V15.5 H10.5Z" fill="#e9c457"/></svg>
<div class="t" style="top:258.94px;left:199.20px;line-height:15px;transform:scaleX(0.992);transform-origin:0 0;">ConnectedDevicesPlatform</div>
<div class="t" style="top:258.28px;left:439.50px;color:#6d6d6d;font-size:11.6px;line-height:15px;">8/24/2022 11:11 AM</div>
<div class="t" style="top:258.94px;left:583.00px;color:#6d6d6d;line-height:15px;">File folder</div>
<svg class="a" style="left:181px;top:278px" width="13" height="16" viewBox="0 0 13 16"><path d="M0.5 0.5 H10.5 V15.5 H0.5Z" fill="#ffe38c" stroke="#e2c061" stroke-width="1"/><path d="M10.5 7 L12.5 9.5 V15.5 H10.5Z" fill="#e9c457"/></svg>
<div class="t" style="top:279.94px;left:199.20px;line-height:15px;transform:scaleX(0.909);transform-origin:0 0;">D3DSCache</div>
<div class="t" style="top:279.28px;left:439.50px;color:#6d6d6d;font-size:11.6px;line-height:15px;">2/6/2024 2:45 PM</div>
<div class="t" style="top:279.94px;left:583.00px;color:#6d6d6d;line-height:15px;">File folder</div>
<svg class="a" style="left:181px;top:299px" width="13" height="16" viewBox="0 0 13 16"><path d="M0.5 0.5 H10.5 V15.5 H0.5Z" fill="#ffe38c" stroke="#e2c061" stroke-width="1"/><path d="M10.5 7 L12.5 9.5 V15.5 H10.5Z" fill="#e9c457"/></svg>
<div class="t" style="top:300.94px;left:199.20px;line-height:15px;transform:scaleX(0.876);transform-origin:0 0;">DBG</div>
<div class="t" style="top:300.28px;left:439.50px;color:#6d6d6d;font-size:11.6px;line-height:15px;">11/3/2020 10:21 AM</div>
<div class="t" style="top:300.94px;left:583.00px;color:#6d6d6d;line-height:15px;">File folder</div>
<svg class="a" style="left:181px;top:320px" width="13" height="16" viewBox="0 0 13 16"><path d="M0.5 0.5 H10.5 V15.5 H0.5Z" fill="#ffe38c" stroke="#e2c061" stroke-width="1"/><path d="M10.5 7 L12.5 9.5 V15.5 H10.5Z" fill="#e9c457"/></svg>
<div class="t" style="top:321.94px;left:199.20px;line-height:15px;transform:scaleX(1.031);transform-origin:0 0;">dummy</div>
<div class="t" style="top:321.28px;left:439.50px;color:#6d6d6d;font-size:11.6px;line-height:15px;">3/26/2019 1:34 PM</div>
<div class="t" style="top:321.94px;left:583.00px;color:#6d6d6d;line-height:15px;">File folder</div>
<svg class="a" style="left:181px;top:341px" width="13" height="16" viewBox="0 0 13 16"><path d="M0.5 0.5 H10.5 V15.5 H0.5Z" fill="#ffe38c" stroke="#e2c061" stroke-width="1"/><path d="M10.5 7 L12.5 9.5 V15.5 H10.5Z" fill="#e9c457"/></svg>
<div class="t" style="top:342.94px;left:199.20px;line-height:15px;transform:scaleX(0.961);transform-origin:0 0;">ElevatedDiagnostics</div>
<div class="t" style="top:342.28px;left:439.50px;color:#6d6d6d;font-size:11.6px;line-height:15px;">9/6/2021 2:43 PM</div>
<div class="t" style="top:342.94px;left:583.00px;color:#6d6d6d;line-height:15px;">File folder</div>
<svg class="a" style="left:181px;top:362px" width="13" height="16" viewBox="0 0 13 16"><path d="M0.5 0.5 H10.5 V15.5 H0.5Z" fill="#ffe38c" stroke="#e2c061" stroke-width="1"/><path d="M10.5 7 L12.5 9.5 V15.5 H10.5Z" fill="#e9c457"/></svg>
<div class="t" style="top:363.94px;left:199.20px;line-height:15px;transform:scaleX(0.945);transform-origin:0 0;">FileZilla</div>
<div class="t" style="top:363.28px;left:439.50px;color:#6d6d6d;font-size:11.6px;line-height:15px;">7/16/2021 1:29 PM</div>
<div class="t" style="top:363.94px;left:583.00px;color:#6d6d6d;line-height:15px;">File folder</div>
<svg class="a" style="left:181px;top:383px" width="13" height="16" viewBox="0 0 13 16"><path d="M0.5 0.5 H10.5 V15.5 H0.5Z" fill="#ffe38c" stroke="#e2c061" stroke-width="1"/><path d="M10.5 7 L12.5 9.5 V15.5 H10.5Z" fill="#e9c457"/></svg>
<div class="t" style="top:384.94px;left:199.20px;line-height:15px;transform:scaleX(0.979);transform-origin:0 0;">Google</div>
<div class="t" style="top:384.28px;left:439.50px;color:#6d6d6d;font-size:11.6px;line-height:15px;">7/16/2021 1:23 PM</div>
<div class="t" style="top:384.94px;left:583.00px;color:#6d6d6d;line-height:15px;">File folder</div>
<svg class="a" style="left:181px;top:404px" width="13" height="16" viewBox="0 0 13 16"><path d="M0.5 0.5 H10.5 V15.5 H0.5Z" fill="#ffe38c" stroke="#e2c061" stroke-width="1"/><path d="M10.5 7 L12.5 9.5 V15.5 H10.5Z" fill="#e9c457"/></svg>
<div class="t" style="top:405.94px;left:199.20px;line-height:15px;transform:scaleX(1.042);transform-origin:0 0;">Microsoft</div>
<div class="t" style="top:405.28px;left:439.50px;color:#6d6d6d;font-size:11.6px;line-height:15px;">11/18/2024 8:42 AM</div>
<div class="t" style="top:405.94px;left:583.00px;color:#6d6d6d;line-height:15px;">File folder</div>
<svg class="a" style="left:181px;top:425px" width="13" height="16" viewBox="0 0 13 16"><path d="M0.5 0.5 H10.5 V15.5 H0.5Z" fill="#ffe38c" stroke="#e2c061" stroke-width="1"/><path d="M10.5 7 L12.5 9.5 V15.5 H10.5Z" fill="#e9c457"/></svg>
<div class="t" style="top:426.94px;left:199.20px;line-height:15px;transform:scaleX(0.995);transform-origin:0 0;">MicrosoftEdge</div>
<div class="t" style="top:426.28px;left:439.50px;color:#6d6d6d;font-size:11.6px;line-height:15px;">9/7/2017 6:16 PM</div>
<div class="t" style="top:426.94px;left:583.00px;color:#6d6d6d;line-height:15px;">File folder</div>
<svg class="a" style="left:181px;top:446px" width="13" height="16" viewBox="0 0 13 16"><path d="M0.5 0.5 H10.5 V15.5 H0.5Z" fill="#ffe38c" stroke="#e2c061" stroke-width="1"/><path d="M10.5 7 L12.5 9.5 V15.5 H10.5Z" fill="#e9c457"/></svg>
<div class="t" style="top:447.94px;left:199.20px;line-height:15px;">Mozilla</div>
<div class="t" style="top:447.28px;left:439.50px;color:#6d6d6d;font-size:11.6px;line-height:15px;">7/16/2021 1:47 PM</div>
<div class="t" style="top:447.94px;left:583.00px;color:#6d6d6d;line-height:15px;">File folder</div>
<svg class="a" style="left:181px;top:467px" width="13" height="16" viewBox="0 0 13 16"><path d="M0.5 0.5 H10.5 V15.5 H0.5Z" fill="#ffe38c" stroke="#e2c061" stroke-width="1"/><path d="M10.5 7 L12.5 9.5 V15.5 H10.5Z" fill="#e9c457"/></svg>
<div class="t" style="top:468.94px;left:199.20px;line-height:15px;transform:scaleX(0.909);transform-origin:0 0;">Opera</div>
<div class="t" style="top:468.28px;left:439.50px;color:#6d6d6d;font-size:11.6px;line-height:15px;">8/4/2023 7:03 PM</div>
<div class="t" style="top:468.94px;left:583.00px;color:#6d6d6d;line-height:15px;">File folder</div>
<svg class="a" style="left:181px;top:488px" width="13" height="16" viewBox="0 0 13 16"><path d="M0.5 0.5 H10.5 V15.5 H0.5Z" fill="#ffe38c" stroke="#e2c061" stroke-width="1"/><path d="M10.5 7 L12.5 9.5 V15.5 H10.5Z" fill="#e9c457"/></svg>
<div class="t" style="top:489.94px;left:199.20px;line-height:15px;transform:scaleX(0.984);transform-origin:0 0;">PackageManagement</div>
<div class="t" style="top:489.28px;left:439.50px;color:#6d6d6d;font-size:11.6px;line-height:15px;">8/4/2023 6:23 PM</div>
<div class="t" style="top:489.94px;left:583.00px;color:#6d6d6d;line-height:15px;">File folder</div>
<svg class="a" style="left:181px;top:509px" width="13" height="16" viewBox="0 0 13 16"><path d="M0.5 0.5 H10.5 V15.5 H0.5Z" fill="#ffe38c" stroke="#e2c061" stroke-width="1"/><path d="M10.5 7 L12.5 9.5 V15.5 H10.5Z" fill="#e9c457"/></svg>
<div class="t" style="top:510.94px;left:199.20px;line-height:15px;transform:scaleX(0.913);transform-origin:0 0;">Packages</div>
<div class="t" style="top:510.28px;left:439.50px;color:#6d6d6d;font-size:11.6px;line-height:15px;">7/18/2024 3:20 PM</div>
<div class="t" style="top:510.94px;left:583.00px;color:#6d6d6d;line-height:15px;">File folder</div>
<svg class="a" style="left:181px;top:530px" width="13" height="16" viewBox="0 0 13 16"><path d="M0.5 0.5 H10.5 V15.5 H0.5Z" fill="#ffe38c" stroke="#e2c061" stroke-width="1"/><path d="M10.5 7 L12.5 9.5 V15.5 H10.5Z" fill="#e9c457"/></svg>
<div class="t" style="top:531.94px;left:199.20px;line-height:15px;transform:scaleX(0.933);transform-origin:0 0;">PeerDistRepub</div>
<div class="t" style="top:531.28px;left:439.50px;color:#6d6d6d;font-size:11.6px;line-height:15px;">9/15/2017 2:12 PM</div>
<div class="t" style="top:531.94px;left:583.00px;color:#6d6d6d;line-height:15px;">File folder</div>
<svg class="a" style="left:181px;top:551px" width="13" height="16" viewBox="0 0 13 16"><path d="M0.5 0.5 H10.5 V15.5 H0.5Z" fill="#ffe38c" stroke="#e2c061" stroke-width="1"/><path d="M10.5 7 L12.5 9.5 V15.5 H10.5Z" fill="#e9c457"/></svg>
<div class="t" style="top:552.94px;left:199.20px;line-height:15px;">Pictures</div>
<div class="a" style="left:768px;top:182px;width:17px;height:370px;background:#f0f0f0;"></div>
<div class="a" style="left:769px;top:199px;width:15px;height:211px;background:#cdcdcd;"></div>
<svg class="a" style="left:772px;top:187px" width="9" height="6" viewBox="0 0 9 6"><path d="M0.5 5.5 L4.5 1.5 L8.5 5.5" fill="none" stroke="#555" stroke-width="1.5"/></svg>
<svg class="a" style="left:772px;top:540px" width="9" height="6" viewBox="0 0 9 6"><path d="M0.5 0.5 L4.5 4.5 L8.5 0.5" fill="none" stroke="#555" stroke-width="1.5"/></svg>
<div class="a" style="left:160px;top:552px;width:608px;height:16px;background:#fff;"></div>
<div class="a" style="left:161px;top:552px;width:607px;height:16px;background:#f0f0f0;"></div>
<div class="a" style="left:178px;top:553px;width:556px;height:14px;background:#cdcdcd;"></div>
<svg class="a" style="left:165px;top:556px" width="6" height="9" viewBox="0 0 6 9"><path d="M5.5 0.5 L1.5 4.5 L5.5 8.5" fill="none" stroke="#555" stroke-width="1.5"/></svg>
<svg class="a" style="left:757px;top:556px" width="6" height="9" viewBox="0 0 6 9"><path d="M0.5 0.5 L4.5 4.5 L0.5 8.5" fill="none" stroke="#555" stroke-width="1.5"/></svg>
<div class="a" style="left:768px;top:552px;width:17px;height:16px;background:#fff;"></div>
<div class="a" style="left:0px;top:568px;width:786px;height:25px;background:#fff;"></div>
<div class="t" style="top:573.23px;left:15.20px;color:#1e2a3a;font-size:11.6px;line-height:15px;">26 items</div>
<div class="a" style="left:737px;top:569px;width:22px;height:23px;background:#cce8ff;border:1px solid #99d1ff"></div>
<svg class="a" style="left:741px;top:574px" width="14" height="13" viewBox="0 0 14 13"><g fill="none" stroke="#777" stroke-width="0.9"><rect x="0.5" y="0.5" width="3" height="3"/><rect x="0.5" y="4.7" width="3" height="3"/><rect x="0.5" y="9" width="3" height="3"/></g><g fill="#555"><rect x="5" y="1.5" width="3" height="1"/><rect x="10" y="1.5" width="3" height="1"/><rect x="5" y="5.7" width="3" height="1"/><rect x="10" y="5.7" width="3" height="1"/><rect x="5" y="10" width="3" height="1"/><rect x="10" y="10" width="3" height="1"/></g></svg>
<svg class="a" style="left:763px;top:574px" width="14" height="11" viewBox="0 0 14 11"><rect x="0.5" y="0.5" width="13" height="10" fill="#fff" stroke="#8a8a8a"/><rect x="2" y="2" width="10" height="7" fill="#a9c8ea"/><path d="M2 6.5 Q6 5 12 7.5 V9 H2Z" fill="#3a5566"/></svg>
</div>
<div class="a" style="left:0;top:680px;width:1280px;height:40px;background:#061620">
<svg class="a" style="left:16px;top:12px" width="16" height="16" viewBox="0 0 16 16"><path d="M0 2.2 L6.6 1.3 V7.6 H0Z M7.4 1.2 L16 0 V7.6 H7.4Z M0 8.4 H6.6 V14.7 L0 13.8Z M7.4 8.4 H16 V16 L7.4 14.8Z" fill="#fff"/></svg>
<div class="a" style="left:48px;top:0px;width:288px;height:40px;background:#f0f0f0;border:1px solid #dcdcdc;border-bottom:none"></div>
<svg class="a" style="left:59px;top:12px" width="18" height="16" viewBox="0 0 18 16"><circle cx="11" cy="6.5" r="5.2" fill="none" stroke="#1e1e1e" stroke-width="1.4"/><path d="M7.2 10.3 L1 16" stroke="#1e1e1e" stroke-width="1.5"/></svg>
<div class="t" style="top:12.98px;left:87.60px;color:#333;font-size:14.5px;line-height:17px;">Type here to search</div>
<svg class="a" style="left:352px;top:12px" width="16" height="16" viewBox="0 0 16 16"><rect x="1" y="3.5" width="10" height="9" fill="none" stroke="#fff" stroke-width="1.1"/><path d="M0 1 H12 M0 15 H12" stroke="#fff" stroke-width="1.1"/><path d="M14.5 0 V3 M14.5 5 V16" stroke="#fff" stroke-width="1.3"/></svg>
<svg class="a" style="left:399px;top:8px" width="25" height="25" viewBox="0 0 25 25"><defs><linearGradient id="te1" x1="0" y1="0.2" x2="1" y2="0.6"><stop offset="0" stop-color="#2db8ee"/><stop offset="0.5" stop-color="#34c4b8"/><stop offset="1" stop-color="#74d84a"/></linearGradient><linearGradient id="te2" x1="0" y1="0" x2="0.6" y2="1"><stop offset="0" stop-color="#1a78d6"/><stop offset="1" stop-color="#0c3f92"/></linearGradient></defs><g transform="scale(0.5208)"><circle cx="24" cy="24" r="23.5" fill="url(#te1)"/><path d="M19 20 C25 17 33 20 33 27 C33 33 27 37 21 35 C16 33 14 25 19 20Z" fill="#1c86e0"/><path d="M1 28 C5 19 14 15 22 19 C16 22 15 31 20 36 C26 42 36 42 43.5 38 C39.5 44.5 32.5 47.8 24 47.8 C12 47.8 2.5 39 1 28Z" fill="url(#te2)"/></g></svg>
<div class="a" style="left:391px;top:37px;width:40px;height:3px;background:#7fb0e6;"></div>
<div class="a" style="left:436px;top:0px;width:48px;height:40px;background:#2a3744;"></div>
<svg class="a" style="left:449px;top:10px" width="22" height="19" viewBox="0 0 22 19"><path d="M0 2 H8 L10 4 H22 V19 H0Z" fill="#f2c84b"/><rect x="0" y="6" width="22" height="13" fill="#ffd865"/><rect x="7" y="11" width="8" height="5" fill="#2c8fd8"/><rect x="0" y="16" width="22" height="3" fill="#e8b73a"/><rect x="8" y="12" width="6" height="7" fill="#3a9be0"/></svg>
<div class="a" style="left:436px;top:37px;width:48px;height:3px;background:#99c9f2;"></div>
<svg class="a" style="left:497px;top:8px" width="24" height="24" viewBox="0 0 24 24"><defs><radialGradient id="tf" cx="0.7" cy="0.2" r="0.9"><stop offset="0" stop-color="#ffe14d"/><stop offset="0.45" stop-color="#ff8a1f"/><stop offset="0.8" stop-color="#ff3a55"/><stop offset="1" stop-color="#e31587"/></radialGradient></defs><path d="M12 24 C5.5 24 0.5 19 0.5 13 C0.5 9 2.5 6 4.5 4 L5.5 7 L7 4 C8 5 9 5.5 10 5.5 C11 3 13 1.5 15 0.5 C14.5 3 15.5 4.5 17.5 5.5 C21 7.5 23.5 10.5 23.5 13.5 C23.5 19.5 18.5 24 12 24Z" fill="url(#tf)"/><circle cx="12" cy="12.5" r="5.5" fill="#6b3fd0"/></svg>
<svg class="a" style="left:546px;top:8px" width="25" height="25" viewBox="0 0 25 25"><rect x="0" y="2" width="25" height="7" fill="#b0243a"/><rect x="0" y="9" width="25" height="7" fill="#3a5fb8"/><rect x="0" y="16" width="25" height="7" fill="#2f9a45"/><rect x="4" y="2" width="1.2" height="21" fill="#6a2a2a" opacity="0.5"/><rect x="20" y="2" width="1.2" height="21" fill="#6a2a2a" opacity="0.5"/><rect x="9" y="0" width="7" height="24" fill="#d8a23a"/><rect x="8" y="12" width="9" height="6" fill="#f4f4f4" stroke="#333" stroke-width="0.8"/></svg>
<div class="a" style="left:538px;top:37px;width:40px;height:3px;background:#7fb0e6;"></div>
<svg class="a" style="left:1073px;top:17px" width="12" height="7" viewBox="0 0 12 7"><path d="M0.5 6.5 L6 1 L11.5 6.5" fill="none" stroke="#fff" stroke-width="1.2"/></svg>
<svg class="a" style="left:1098px;top:12px" width="12" height="16" viewBox="0 0 12 16"><rect x="1" y="4.5" width="7" height="7" rx="1.2" fill="none" stroke="#fff" stroke-width="1.2"/><path d="M8 7 L11 5 V11 L8 9" fill="none" stroke="#fff" stroke-width="1.1"/><path d="M1 2 Q5 0 9 2 M1 14 Q5 16 9 14" fill="none" stroke="#ddd" stroke-width="1" stroke-dasharray="2 1"/></svg>
<svg class="a" style="left:1119px;top:14px" width="16" height="14" viewBox="0 0 16 14"><rect x="4.5" y="0.5" width="11" height="8" fill="none" stroke="#fff" stroke-width="1.1"/><path d="M10 8.5 V11 M6 13 H14 M1.5 0.5 V11 M0 3 H3" stroke="#fff" stroke-width="1.1"/><path d="M0 2 H4 L2 4Z" fill="#fff"/></svg>
<svg class="a" style="left:1143px;top:12px" width="17" height="16" viewBox="0 0 17 16"><path d="M0.6 5.5 H3.5 L7.5 1.5 V14.5 L3.5 10.5 H0.6Z" fill="none" stroke="#fff" stroke-width="1.1"/><path d="M10 5 Q11.5 8 10 11 M12.3 3 Q14.8 8 12.3 13 M14.6 1 Q18 8 14.6 15" fill="none" stroke="#fff" stroke-width="1.1"/></svg>
<div class="t" style="top:4.42px;left:1165.00px;width:60px;text-align:center;color:#fff;font-size:11.2px;line-height:15px;">2:25 PM</div>
<div class="t" style="top:22.05px;left:1160.00px;width:70px;text-align:center;color:#fff;font-size:11.4px;line-height:15px;">5/30/2025</div>
<svg class="a" style="left:1238px;top:12px" width="18" height="17" viewBox="0 0 18 17"><path d="M0.6 0.6 H16.4 V12 H10.5 L8.5 15.5 L6.5 12 H0.6Z" fill="none" stroke="#fff" stroke-width="1.1"/></svg>
<div class="a" style="left:1275px;top:0px;width:1px;height:40px;background:#5a6670;"></div>
</div>
</body></html>
